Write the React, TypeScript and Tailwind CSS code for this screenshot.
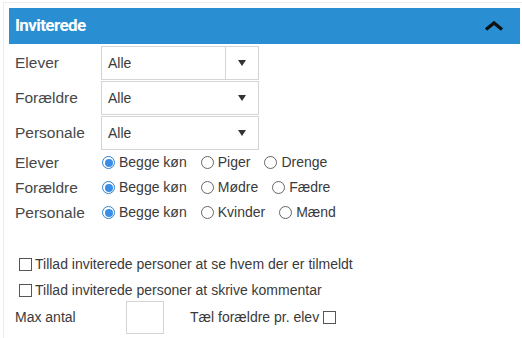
import React from "react";

function Radio({ checked }: { checked?: boolean }) {
  return checked ? (
    <span className="box-border flex h-[13px] w-[13px] shrink-0 items-center justify-center rounded-full border border-[#2f7fd0] bg-white">
      <span className="h-[8px] w-[8px] rounded-full bg-[#3a8ee6]" />
    </span>
  ) : (
    <span className="box-border h-[13px] w-[13px] shrink-0 rounded-full border border-[#666] bg-white" />
  );
}

function Box() {
  return <span className="box-border h-[13px] w-[13px] shrink-0 border border-[#555] bg-white" />;
}

function Opt({ checked, label }: { checked?: boolean; label: string }) {
  return (
    <span className="mr-[14px] flex items-center gap-[4px]">
      <Radio checked={checked} />
      <span>{label}</span>
    </span>
  );
}

function Select({ divider }: { divider?: boolean }) {
  return (
    <div className="box-border flex h-[34px] w-[158px] items-center border border-[#d4d4d4] bg-white text-[14px] text-[#3a3a3a]">
      <span className="flex-1 pl-[6px]">Alle</span>
      <span
        className={
          divider
            ? "flex h-full w-[33px] items-center justify-center border-l border-[#d4d4d4]"
            : "flex h-full w-[33px] items-center justify-center"
        }
      >
        <svg width="8" height="6" viewBox="0 0 8 6">
          <path d="M0 0 L8 0 L4 6 Z" fill="#333" />
        </svg>
      </span>
    </div>
  );
}

export default function App() {
  const labelCls = "w-[86px] shrink-0 text-[15.5px] text-[#484848]";
  return (
    <div
      className="h-[338px] w-[522px] overflow-hidden bg-white"
      style={{ fontFamily: '"Liberation Sans", Arial, sans-serif' }}
    >
      <div className="ml-[3px] mt-[2px] h-[400px] border-l border-t border-[#ececec] pl-[5px] pt-[5px]">
        <div className="flex h-[36px] w-[511px] items-center justify-between bg-[#2a8fd2] pl-[6px] pr-[16px]">
          <span
            className="text-[17px] font-bold tracking-[-0.6px] text-white"
            style={{ fontFamily: 'Roboto, "Liberation Sans", sans-serif' }}
          >
            Inviterede
          </span>
          <svg width="20" height="10" viewBox="0 0 20 10">
            <path d="M2 8.5 L10 2 L18 8.5" fill="none" stroke="#111" strokeWidth="3.4" />
          </svg>
        </div>

        <div className="mt-[2px] flex flex-col gap-[1px] pl-[6px]">
          <div className="flex items-center">
            <span className={labelCls}>Elever</span>
            <Select divider />
          </div>
          <div className="flex items-center">
            <span className={labelCls}>Forældre</span>
            <Select />
          </div>
          <div className="flex items-center">
            <span className={labelCls}>Personale</span>
            <Select />
          </div>
        </div>

        <div className="flex flex-col pl-[6px] text-[14px] text-[#3a3a3a]">
          <div className="flex h-[25px] items-center">
            <span className={labelCls}>Elever</span>
            <div className="ml-[1px] flex items-center">
              <Opt checked label="Begge køn" />
              <Opt label="Piger" />
              <Opt label="Drenge" />
            </div>
          </div>
          <div className="flex h-[25px] items-center">
            <span className={labelCls}>Forældre</span>
            <div className="ml-[1px] flex items-center">
              <Opt checked label="Begge køn" />
              <Opt label="Mødre" />
              <Opt label="Fædre" />
            </div>
          </div>
          <div className="flex h-[25px] items-center">
            <span className={labelCls}>Personale</span>
            <div className="ml-[1px] flex items-center">
              <Opt checked label="Begge køn" />
              <Opt label="Kvinder" />
              <Opt label="Mænd" />
            </div>
          </div>
        </div>

        <div className="mt-[26px] flex flex-col pl-[10px] text-[14px] text-[#3a3a3a]">
          <div className="flex h-[26px] items-center gap-[3px]">
            <Box />
            <span>Tillad inviterede personer at se hvem der er tilmeldt</span>
          </div>
          <div className="flex h-[26px] items-center gap-[3px]">
            <Box />
            <span>Tillad inviterede personer at skrive kommentar</span>
          </div>
        </div>

        <div className="mt-[-2px] flex items-center pl-[6px] text-[14px] text-[#3a3a3a]">
          <span className="w-[111px] shrink-0">Max antal</span>
          <span className="box-border h-[33px] w-[38px] border border-[#d4d4d4] bg-white" />
          <span className="ml-[26px] flex items-center gap-[4px]">
            <span>Tæl forældre pr. elev</span>
            <Box />
          </span>
        </div>
      </div>
    </div>
  );
}
